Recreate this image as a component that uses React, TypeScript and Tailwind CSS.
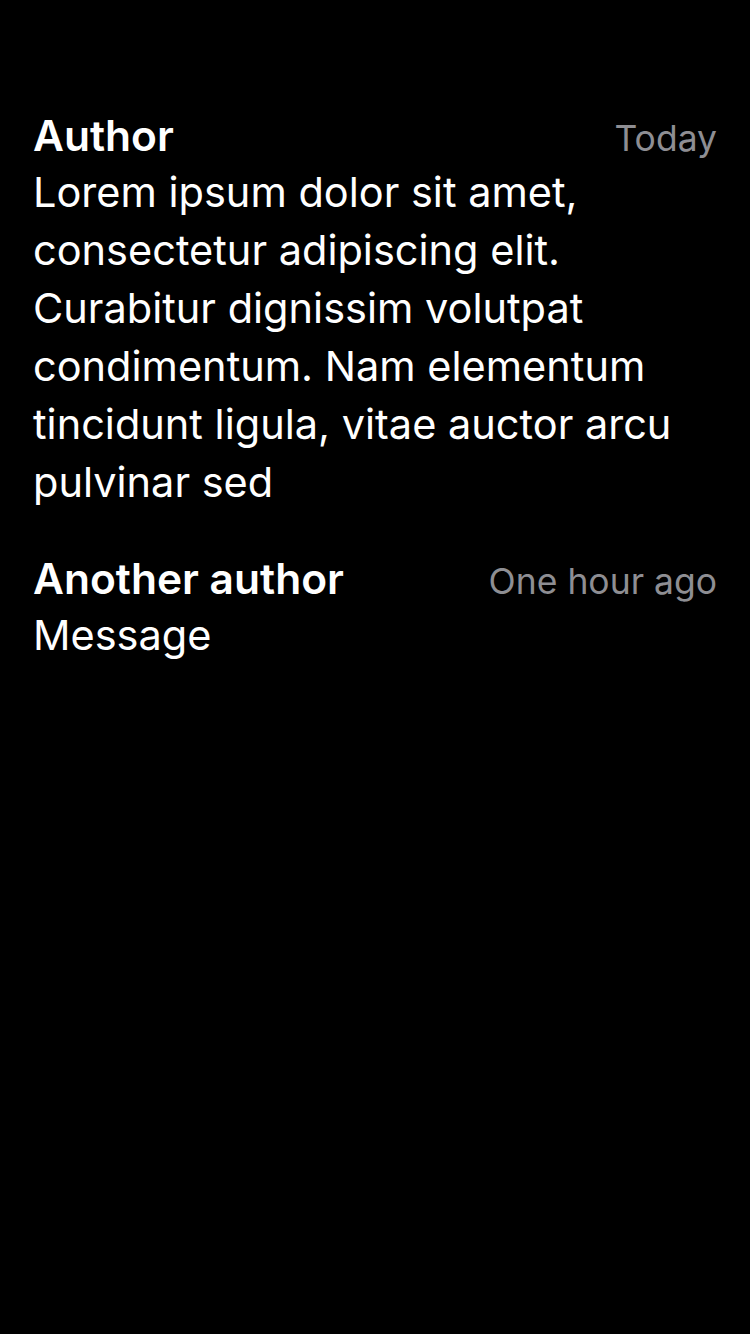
const messages = [
  {
    author: 'Author',
    time: 'Today',
    body: 'Lorem ipsum dolor sit amet, consectetur adipiscing elit. Curabitur dignissim volutpat condimentum. Nam elementum tincidunt ligula, vitae auctor arcu pulvinar sed',
  },
  { author: 'Another author', time: 'One hour ago', body: 'Message' },
];

export default function App() {
  return (
    <div className="min-h-[1334px] w-[750px] bg-black pl-[33px] pr-[33px] pt-[109px] font-['Inter',sans-serif] text-white">
      <div className="flex flex-col gap-[41px]">
        {messages.map((m) => (
          <div key={m.author}>
            <div className="flex items-baseline justify-between leading-[54px]">
              <span className="text-[42.5px] font-semibold">{m.author}</span>
              <span className="text-[35.5px] text-[#8e8e93]">{m.time}</span>
            </div>
            <p className="-mt-[3px] text-[41.5px] leading-[58px]">{m.body}</p>
          </div>
        ))}
      </div>
    </div>
  );
}
